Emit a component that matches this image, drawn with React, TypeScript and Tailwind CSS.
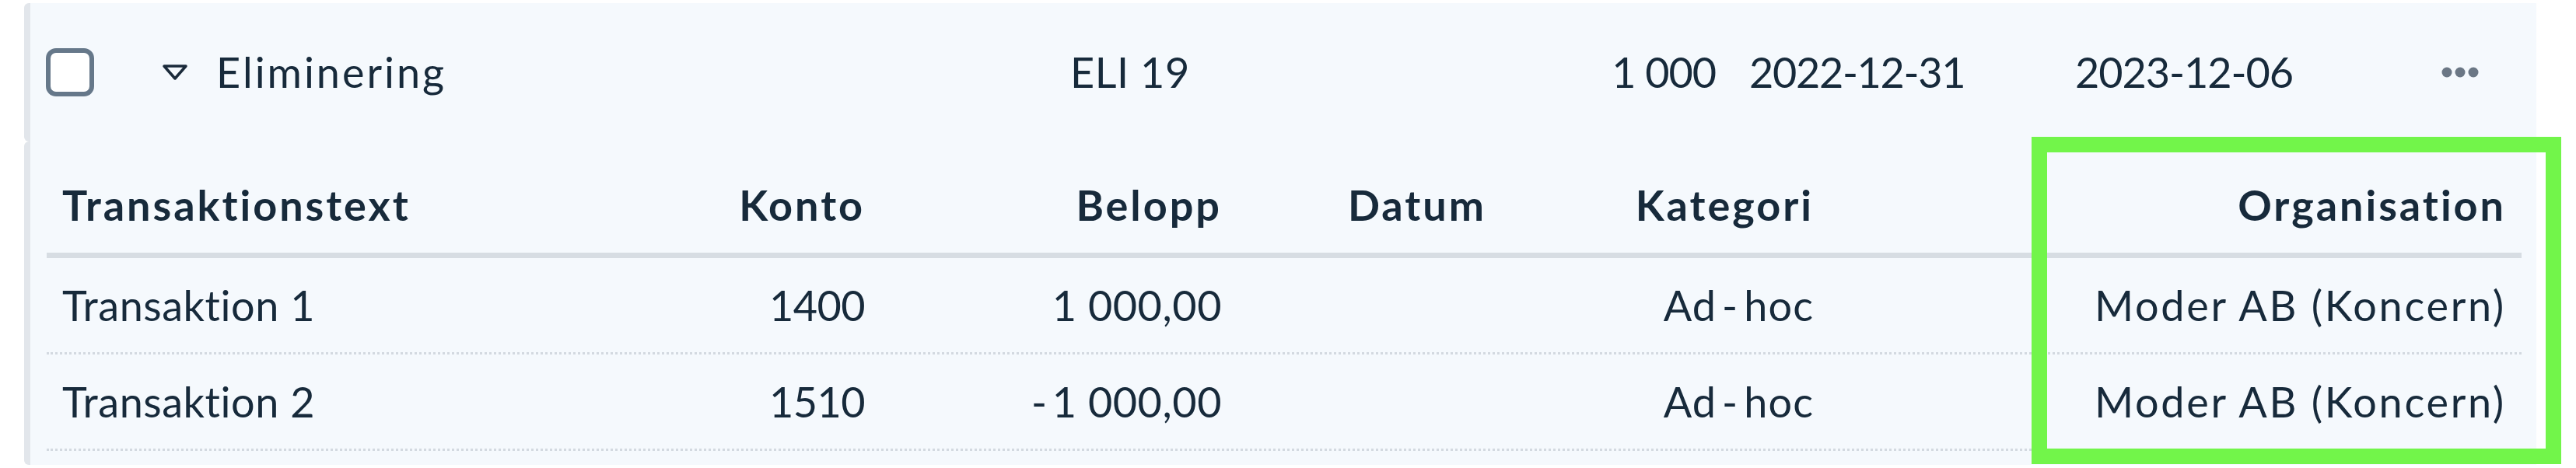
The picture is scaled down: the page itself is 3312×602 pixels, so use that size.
import React from "react";

const font = { fontFamily: "Lato, 'Noto Sans', sans-serif" };

function Checkbox() {
  return <div className="w-[62px] h-[62px] shrink-0 rounded-[13px] border-[6px] border-[#66788a] bg-white" />;
}

function Caret() {
  return (
    <svg width="34" height="22" viewBox="0 0 34 22" className="shrink-0">
      <path d="M3 3 H31 L17 19 Z" fill="none" stroke="#1b2b3b" strokeWidth="3.5" strokeLinejoin="round" />
    </svg>
  );
}

function Dots() {
  return (
    <svg width="48" height="14" viewBox="0 0 48 14" className="shrink-0">
      <circle cx="7" cy="7" r="6.5" fill="#6b7785" />
      <circle cx="24" cy="7" r="6.5" fill="#6b7785" />
      <circle cx="41" cy="7" r="6.5" fill="#6b7785" />
    </svg>
  );
}

const cols = "grid grid-cols-[640px_432px_459px_340px_421px_890px]";

function AdHoc() {
  return (
    <span>
      Ad<span className="mx-[7px]">-</span>hoc
    </span>
  );
}

function Amount({ value }: { value: string }) {
  if (value.startsWith("-")) {
    return (
      <span>
        <span className="mr-[6px]">-</span>
        {value.slice(1)}
      </span>
    );
  }
  return <span>{value}</span>;
}

const rows = [
  { text: "Transaktion 1", konto: "1400", belopp: "1 000,00", org: "Moder AB (Koncern)" },
  { text: "Transaktion 2", konto: "1510", belopp: "-1 000,00", org: "Moder AB (Koncern)" },
];

export default function App() {
  return (
    <div className="relative w-[3312px] h-[602px] overflow-hidden bg-white text-[#172a3b] pl-[31px] pr-[51px] pt-[4px]" style={font}>
      {/* Top row */}
      <div className="flex items-center h-[178px] bg-[#f5f9fd] border-l-[8px] border-[#e2e6eb] rounded-l-[6px] pl-[20px] text-[54px] leading-none">
        <Checkbox />
        <div className="ml-[87px]"><Caret /></div>
        <div className="ml-[36px] w-[1098px] tracking-[0.055em]">Eliminering</div>
        <div className="w-[540px] tracking-[0.01em]">ELI 19</div>
        <div className="w-[290px] text-right tracking-[-0.02em]">1 000</div>
        <div className="ml-[43px] w-[419px] tracking-[-0.025em]">2022-12-31</div>
        <div className="w-[471px] tracking-[-0.02em]">2023-12-06</div>
        <Dots />
      </div>

      {/* Detail */}
      <div className="h-[416px] bg-[#f5f9fd] border-l-[8px] border-[#e2e6eb] rounded-l-[6px] pl-[21px] pr-[19px] text-[54px] leading-none">
        <div className={`${cols} h-[150px] pt-[21px] items-center border-b-[7px] border-[#d7dde3] font-bold tracking-[0.055em]`}>
          <div className="px-[20px]">Transaktionstext</div>
          <div className="px-[20px] text-right">Konto</div>
          <div className="px-[20px] text-right">Belopp</div>
          <div className="px-[20px] text-right">Datum</div>
          <div className="px-[20px] text-right">Kategori</div>
          <div className="px-[20px] text-right">Organisation</div>
        </div>
        {rows.map((r) => (
          <div key={r.text} className={`${cols} h-[124px] items-center border-b-[3px] border-dotted border-[#d3d9e0]`}>
            <div className="px-[20px] tracking-[0.01em]">{r.text}</div>
            <div className="px-[20px] text-right tracking-[-0.01em]">{r.konto}</div>
            <div className="px-[20px] text-right tracking-[0.01em]"><Amount value={r.belopp} /></div>
            <div className="px-[20px] text-right"></div>
            <div className="px-[20px] text-right tracking-[0.02em]"><AdHoc /></div>
            <div className="px-[20px] text-right tracking-[0.05em]">{r.org}</div>
          </div>
        ))}
      </div>

      {/* Highlight annotation */}
      <div className="absolute left-[2612px] top-[176px] w-[681px] h-[421px] border-[20px] border-[#72f54a]" />
    </div>
  );
}
